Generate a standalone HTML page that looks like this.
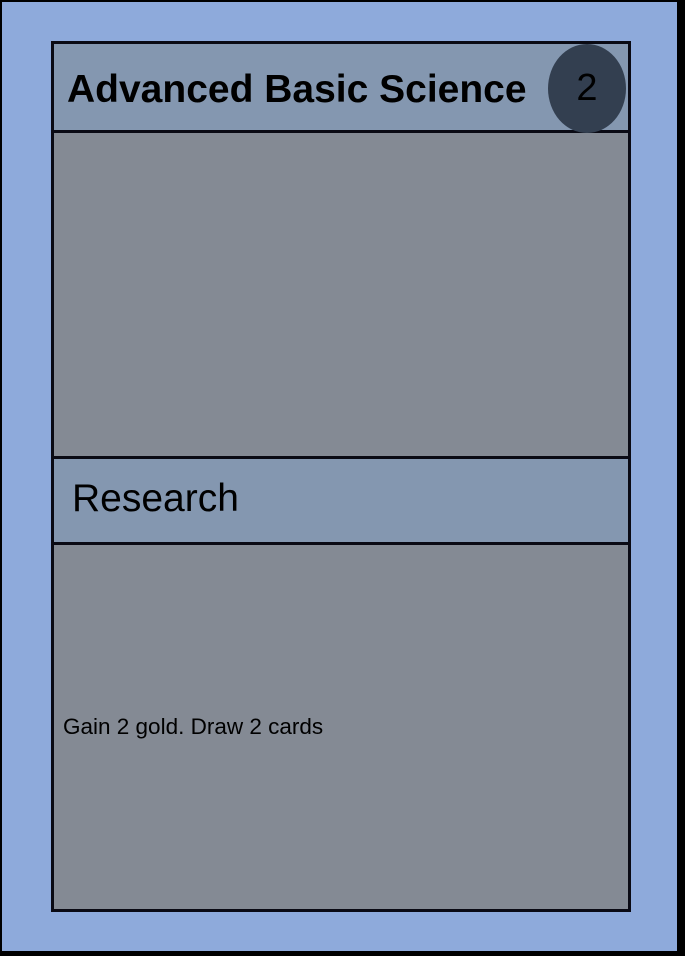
<!DOCTYPE html>
<html><head><style>
html,body{margin:0;padding:0;}
body{width:685px;height:956px;position:relative;overflow:hidden;background:#000;font-family:"Liberation Sans",Arial,sans-serif;}
.bg{position:absolute;left:2px;top:2px;width:675px;height:949px;background:#8eaadb;}
.card{position:absolute;left:51px;top:41px;width:574px;height:865px;border:3px solid #0a0a14;background:#848a94;}
.hdr{position:absolute;left:0;top:0;width:574px;height:86px;background:#8497b0;border-bottom:3px solid #0a0a14;}
.title{position:absolute;left:13px;top:23px;font-size:39px;font-weight:bold;color:#000;white-space:nowrap;line-height:46px;}
.circ{position:absolute;left:494px;top:0px;width:78px;height:89px;border-radius:50%;background:#333f50;}
.num{position:absolute;left:494px;top:22px;width:78px;text-align:center;font-size:38px;line-height:44px;color:#000;}
.band{position:absolute;left:0;top:412px;width:574px;height:83px;background:#8497b0;border-top:3px solid #0a0a14;border-bottom:3px solid #0a0a14;}
.rs{position:absolute;left:18px;top:18px;font-size:39px;line-height:44px;color:#000;}
.txt{position:absolute;left:9px;top:670px;font-size:22.5px;line-height:26px;color:#000;white-space:nowrap;}
</style></head><body>
<div class="bg"></div>
<div class="card">
 <div class="hdr"><div class="title">Advanced Basic Science</div></div>
 <div class="circ"></div><div class="num">2</div>
 <div class="band"><div class="rs">Research</div></div>
 <div class="txt">Gain 2 gold. Draw 2 cards</div>
</div>
</body></html>
